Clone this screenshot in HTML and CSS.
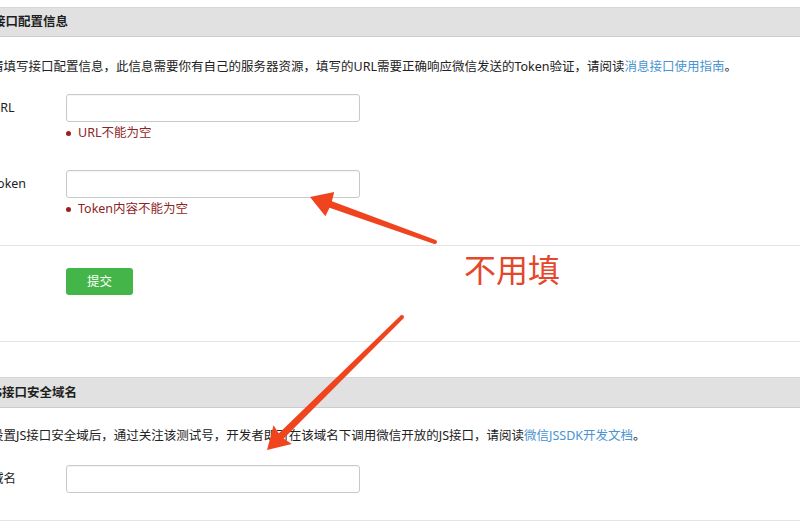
FILE: index.html
```html
<!DOCTYPE html>
<html lang="zh-CN">
<head>
<meta charset="utf-8">
<title>接口配置信息</title>
<link rel="stylesheet" href="styles.css">
</head>
<body>
<div class="page">
  <section class="panel">
    <h2 class="panel-head">接口配置信息</h2>
    <p class="desc">请填写接口配置信息，此信息需要你有自己的服务器资源，填写的URL需要正确响应微信发送的Token验证，请阅读<a class="link" href="#">消息接口使用指南</a>。</p>
    <div class="form-row">
      <label class="form-label">URL</label>
      <div class="form-field">
        <input class="text-input" type="text">
        <p class="form-error"><span class="err-dot"></span>URL不能为空</p>
      </div>
    </div>
    <div class="form-row form-row--next">
      <label class="form-label">Token</label>
      <div class="form-field">
        <input class="text-input" type="text">
        <p class="form-error"><span class="err-dot"></span>Token内容不能为空</p>
      </div>
    </div>
    <div class="form-actions">
      <button class="btn-primary" type="button">提交</button>
    </div>
  </section>
  <section class="panel panel--second">
    <h2 class="panel-head panel-head--tight">JS接口安全域名</h2>
    <p class="desc desc--second">设置JS接口安全域后，通过关注该测试号，开发者即可在该域名下调用微信开放的JS接口，请阅读<a class="link" href="#">微信JSSDK开发文档</a>。</p>
    <div class="form-row form-row--domain">
      <label class="form-label">域名</label>
      <div class="form-field">
        <input class="text-input" type="text">
      </div>
    </div>
  </section>
</div>

<svg class="annot-arrows" width="800" height="526" viewBox="0 0 800 526" aria-hidden="true">
  <polygon class="arrow" points="310,197 334.2,191.9 331.9,201.2 435.7,240.1 434.3,243.9 329.5,207.8 325.4,216.3"/>
  <circle class="arrow" cx="435" cy="242" r="2"/>
  <polygon class="arrow" points="267,450 291.8,443.9 283.7,438.5 403.4,318.4 400.6,315.6 278.7,433.5 273.6,425.3"/>
  <circle class="arrow" cx="402" cy="317" r="2"/>
</svg>
<div class="annot-note">不用填</div>
</body>
</html>
```

FILE: styles.css
```css
html, body {
  margin: 0;
  padding: 0;
  background: #ffffff;
}

body {
  position: relative;
  width: 800px;
  height: 526px;
  overflow: hidden;
  font-family: "Noto Sans", "Noto Sans CJK SC", sans-serif;
  font-size: 12.5px;
  color: #222222;
}

.page {
  margin-left: -9px;
  width: 830px;
}

.panel {
  padding-top: 7px;
}

.panel--second {
  padding-top: 35px;
}

.panel-head {
  margin: 0;
  height: 28px;
  line-height: 28px;
  padding-left: 2px;
  background: #e1e1e1;
  border-top: 1px solid #d6d6d6;
  border-bottom: 1px solid #cbcbcb;
  font-size: 12.5px;
  font-weight: 700;
  color: #1f1f1f;
}

.panel-head--tight {
  height: 29px;
  line-height: 29px;
  padding-left: 0;
}

.desc {
  margin: 0;
  padding-top: 20px;
  line-height: 20px;
  white-space: nowrap;
}

.desc--second {
  padding-top: 18px;
}

.link {
  color: #4a94d0;
  text-decoration: none;
}

.form-row {
  display: flex;
  align-items: flex-start;
  margin-top: 17px;
}

.form-row--next {
  margin-top: 28px;
}

.form-row--domain {
  margin-top: 19px;
  padding-bottom: 27px;
  border-bottom: 1px solid #e3e3e3;
}

.form-label {
  width: 75px;
  flex: none;
  height: 28px;
  line-height: 28px;
}

.form-field {
  display: flex;
  flex-direction: column;
}

.text-input {
  box-sizing: border-box;
  width: 294px;
  height: 28px;
  margin: 0;
  border: 1px solid #c9c9c9;
  border-radius: 3px;
  background: #ffffff;
  box-shadow: inset 0 1px 1px rgba(0, 0, 0, 0.04);
}

.form-error {
  margin: 2px 0 0;
  height: 18px;
  line-height: 18px;
  color: #8e2424;
  display: flex;
  align-items: center;
}

.err-dot {
  width: 5px;
  height: 5px;
  border-radius: 50%;
  background: #9a1f1f;
  margin-right: 7px;
  flex: none;
}

.form-actions {
  margin-top: 27px;
  border-top: 1px solid #e3e3e3;
  border-bottom: 1px solid #e3e3e3;
  padding: 22px 0 46px 75px;
}

.btn-primary {
  display: block;
  width: 67px;
  height: 27px;
  margin: 0;
  padding: 0;
  border: none;
  border-radius: 3px;
  background: #44b549;
  color: #ffffff;
  font-family: "Noto Sans", "Noto Sans CJK SC", sans-serif;
  font-size: 12.5px;
  line-height: 27px;
  text-align: center;
}

.annot-arrows {
  position: absolute;
  left: 0;
  top: 0;
  pointer-events: none;
}

.arrow {
  fill: #f0441f;
}

.annot-note {
  position: absolute;
  left: 464px;
  top: 252px;
  font-family: "Noto Sans CJK SC", sans-serif;
  font-size: 32px;
  line-height: 1;
  font-weight: 400;
  color: #e4472b;
  letter-spacing: 0;
}
```
